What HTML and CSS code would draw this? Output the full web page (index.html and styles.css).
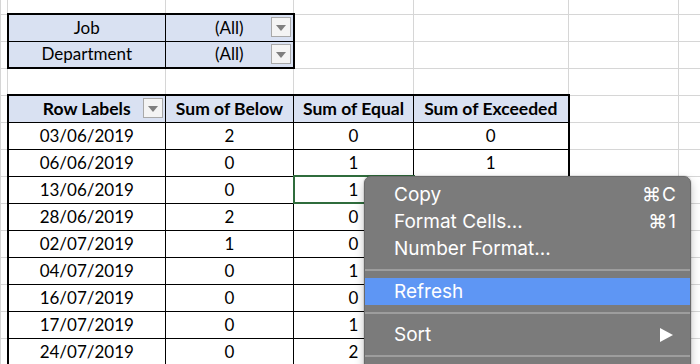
FILE: index.html
```html
<!DOCTYPE html>
<html lang="en">
<head>
  <meta charset="UTF-8" />
  <title>Pivot table</title>
  <link rel="stylesheet" href="styles.css">
</head>
<body>
  <table class="sheet">
    <colgroup>
      <col class="c0"><col class="ca"><col class="cb"><col class="cc"><col class="cd"><col class="ce"><col class="cf">
    </colgroup>
    <tr class="first"><td></td><td></td><td></td><td></td><td></td><td></td><td></td></tr>
    <tr>
      <td></td>
      <td class="pv blue ot ol">Job</td>
      <td class="pv blue ot or drop">(All)<span class="dd"></span></td>
      <td></td><td></td><td></td><td></td>
    </tr>
    <tr>
      <td></td>
      <td class="pv blue ob ol">Department</td>
      <td class="pv blue ob or drop">(All)<span class="dd"></span></td>
      <td></td><td></td><td></td><td></td>
    </tr>
    <tr><td></td><td></td><td></td><td></td><td></td><td></td><td></td></tr>
    <tr class="head">
      <td></td>
      <td class="pv blue ot ol drop">Row Labels<span class="dd"></span></td>
      <td class="pv blue ot">Sum of Below</td>
      <td class="pv blue ot">Sum of Equal</td>
      <td class="pv blue ot or">Sum of Exceeded</td>
      <td></td><td></td>
    </tr>
    <tr><td></td><td class="pv ol">03/06/2019</td><td class="pv">2</td><td class="pv">0</td><td class="pv or">0</td><td></td><td></td></tr>
    <tr><td></td><td class="pv ol">06/06/2019</td><td class="pv">0</td><td class="pv">1</td><td class="pv or">1</td><td></td><td></td></tr>
    <tr><td></td><td class="pv ol">13/06/2019</td><td class="pv">0</td><td class="pv active">1</td><td class="pv or"></td><td></td><td></td></tr>
    <tr><td></td><td class="pv ol">28/06/2019</td><td class="pv">2</td><td class="pv">0</td><td class="pv or"></td><td></td><td></td></tr>
    <tr><td></td><td class="pv ol">02/07/2019</td><td class="pv">1</td><td class="pv">0</td><td class="pv or"></td><td></td><td></td></tr>
    <tr><td></td><td class="pv ol">04/07/2019</td><td class="pv">0</td><td class="pv">1</td><td class="pv or"></td><td></td><td></td></tr>
    <tr><td></td><td class="pv ol">16/07/2019</td><td class="pv">0</td><td class="pv">0</td><td class="pv or"></td><td></td><td></td></tr>
    <tr><td></td><td class="pv ol">17/07/2019</td><td class="pv">0</td><td class="pv">1</td><td class="pv or"></td><td></td><td></td></tr>
    <tr><td></td><td class="pv ol">24/07/2019</td><td class="pv">0</td><td class="pv">2</td><td class="pv or"></td><td></td><td></td></tr>
  </table>

  <div class="menu">
    <div class="item"><span>Copy</span><span class="key">&#8984;C</span></div>
    <div class="item"><span>Format Cells...</span><span class="key">&#8984;1</span></div>
    <div class="item"><span>Number Format...</span></div>
    <div class="sep"></div>
    <div class="item hl"><span>Refresh</span></div>
    <div class="sep"></div>
    <div class="item"><span>Sort</span><span class="arrow"></span></div>
    <div class="sep"></div>
  </div>
</body>
</html>
```

FILE: styles.css
```css
body {
  margin: 0;
  width: 700px;
  height: 364px;
  overflow: hidden;
  background: #fff;
  font-family: Lato, "Open Sans", sans-serif;
  color: #000;
  position: relative;
}
.sheet {
  border-collapse: collapse;
  table-layout: fixed;
  width: 700px;
  font-size: 17px;
}
.c0 { width: 7px; }
.ca { width: 158px; }
.cb { width: 128px; }
.cc { width: 120px; }
.cd { width: 155px; }
.ce { width: 110px; }
.cf { width: 22px; }
.sheet tr {
  height: 27px;
}
.sheet tr.first {
  height: 14px;
}
.sheet td {
  border: 1px solid #d6d6d6;
  padding: 0;
  text-align: center;
  white-space: nowrap;
  overflow: hidden;
  position: relative;
  line-height: 20px;
}
.sheet tr.first td {
  border-top: none;
}
.sheet td.pv {
  border: 1px solid #000;
}
.blue {
  background: #d9e1f2;
}
.head td.pv {
  font-weight: bold;
  font-size: 17.5px;
}
.sheet td.ot { border-top: 2px solid #000; }
.sheet td.ob { border-bottom: 2px solid #000; }
.sheet td.ol { border-left: 2px solid #000; }
.sheet td.or { border-right: 2px solid #000; }
.dd {
  position: absolute;
  right: 2px;
  top: 2px;
  width: 20px;
  height: 20px;
  box-sizing: border-box;
  border: 1px solid #a9a9a9;
  background: #f4f4f4;
}
.dd::after {
  content: "";
  position: absolute;
  left: 4px;
  top: 7px;
  border-top: 6px solid #7f7f7f;
  border-left: 5px solid transparent;
  border-right: 5px solid transparent;
}
.sheet td.active {
  outline: 2px solid #2f6c3c;
  outline-offset: -1px;
}

.menu {
  position: absolute;
  left: 364px;
  top: 176px;
  width: 327px;
  height: 200px;
  box-sizing: border-box;
  padding-top: 4px;
  background: #7b7b7b;
  border: 1px solid #6a6a6a;
  border-radius: 7px;
  box-shadow: 0 0 0 1px rgba(0,0,0,0.08), 0 4px 10px rgba(0,0,0,0.25);
  font-family: Inter, "Liberation Sans", sans-serif;
  font-size: 19px;
  color: #fff;
}
.item {
  height: 27px;
  line-height: 27px;
  padding: 0 13px 0 29px;
  display: flex;
  justify-content: space-between;
  align-items: center;
}
.item.hl {
  background: #5e96f4;
}
.key {
  letter-spacing: 1px;
}
.arrow {
  width: 0;
  height: 0;
  margin-right: 4px;
  border-left: 13px solid #fff;
  border-top: 7px solid transparent;
  border-bottom: 7px solid transparent;
}
.sep {
  height: 16px;
  display: flex;
  align-items: center;
}
.sep::before {
  content: "";
  flex: 1;
  height: 2px;
  background: #9d9d9d;
}
```
